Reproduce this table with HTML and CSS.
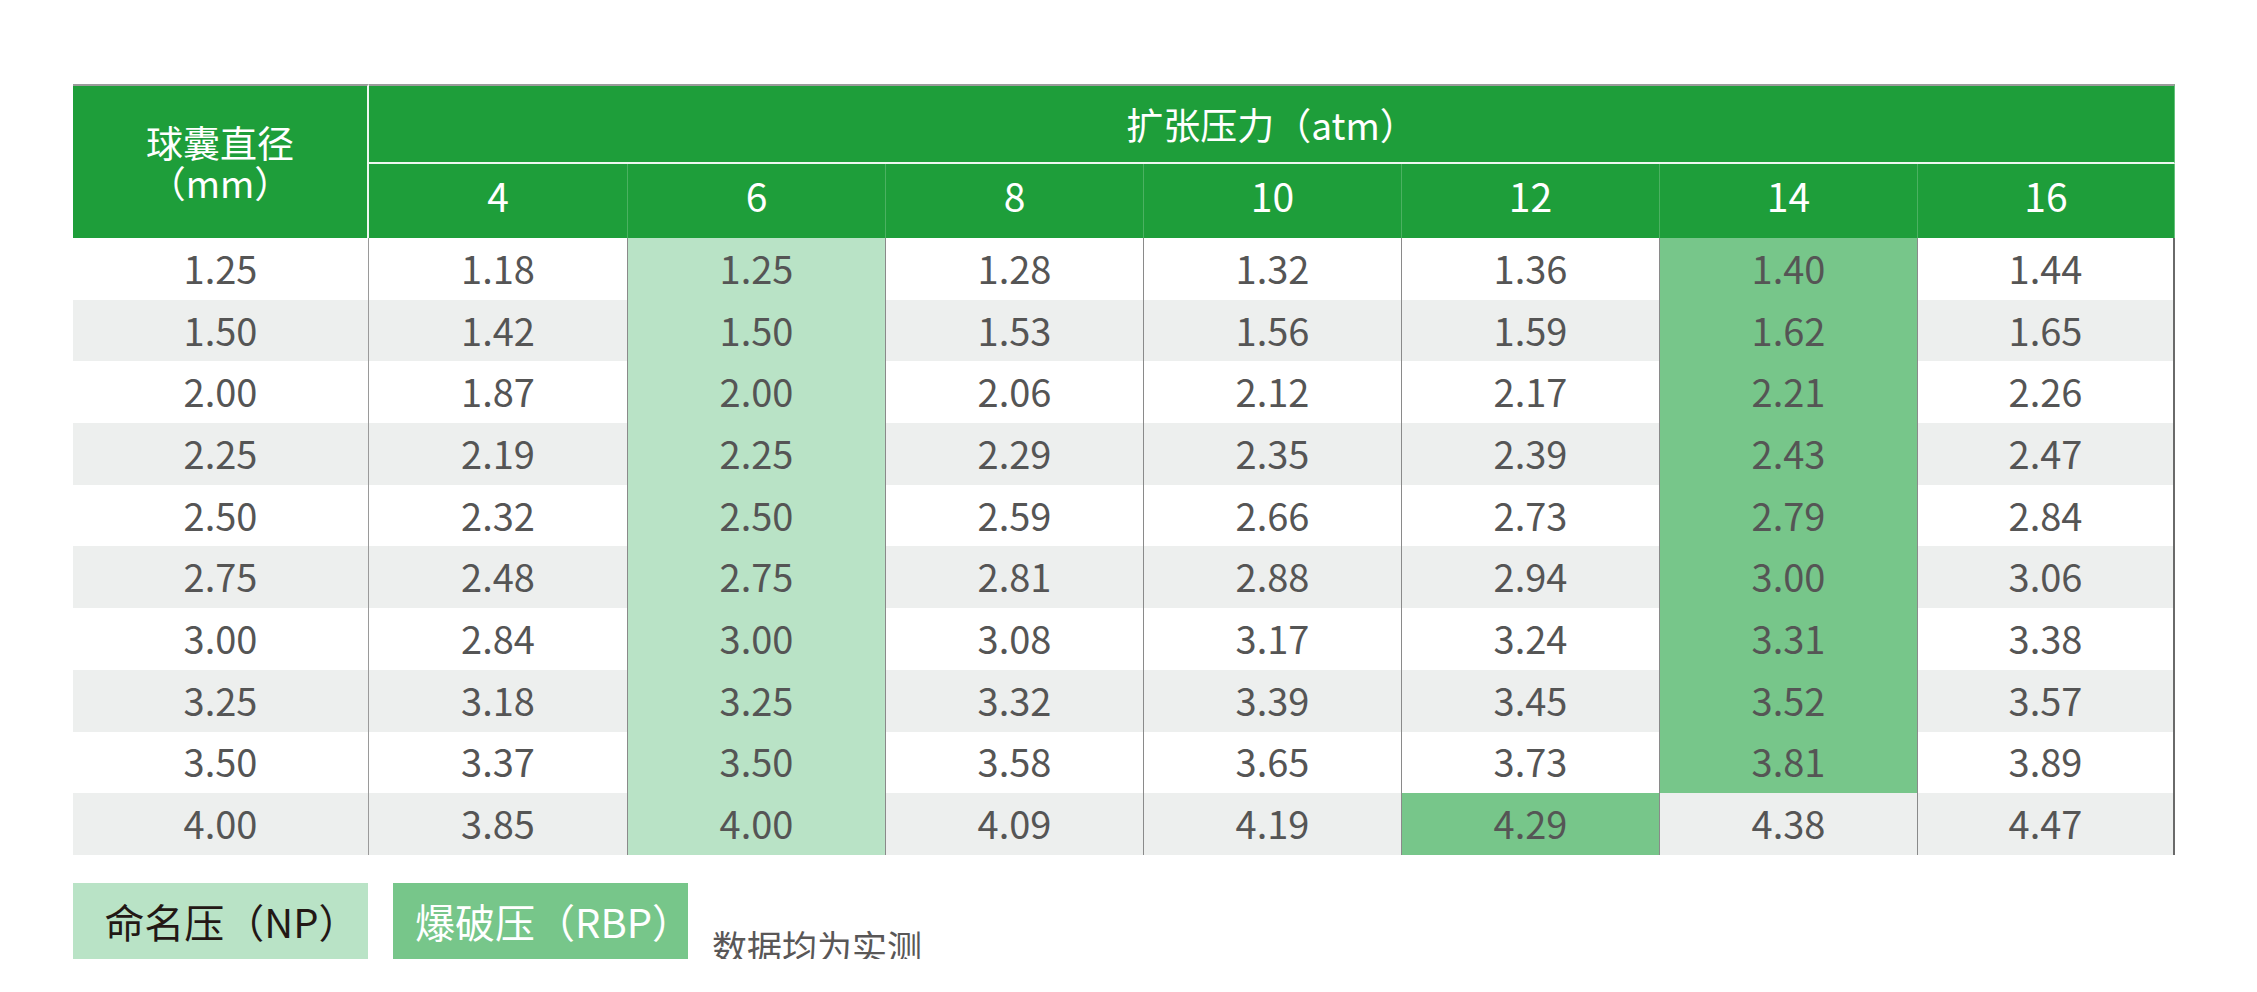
FILE: index.html
```html
<!DOCTYPE html>
<html lang="zh-CN">
<head>
<meta charset="utf-8">
<title>球囊直径 / 扩张压力</title>
<link rel="stylesheet" href="styles.css">
</head>
<body>
<main class="page">
  <table class="spec">
    <colgroup>
      <col class="col-dia">
      <col><col><col><col><col><col><col>
    </colgroup>
    <thead>
      <tr class="hrow-top">
        <th rowspan="2" class="dia-head"><span class="dia-line">球囊直径</span><span class="dia-line">（mm）</span></th>
        <th colspan="7" class="press-head">扩张压力（atm）</th>
      </tr>
      <tr class="hrow-sub">
        <th>4</th><th>6</th><th>8</th><th>10</th><th>12</th><th>14</th><th>16</th>
      </tr>
    </thead>
    <tbody>
      <tr><td>1.25</td><td>1.18</td><td class="np">1.25</td><td>1.28</td><td>1.32</td><td>1.36</td><td class="rbp">1.40</td><td>1.44</td></tr>
      <tr><td>1.50</td><td>1.42</td><td class="np">1.50</td><td>1.53</td><td>1.56</td><td>1.59</td><td class="rbp">1.62</td><td>1.65</td></tr>
      <tr><td>2.00</td><td>1.87</td><td class="np">2.00</td><td>2.06</td><td>2.12</td><td>2.17</td><td class="rbp">2.21</td><td>2.26</td></tr>
      <tr><td>2.25</td><td>2.19</td><td class="np">2.25</td><td>2.29</td><td>2.35</td><td>2.39</td><td class="rbp">2.43</td><td>2.47</td></tr>
      <tr><td>2.50</td><td>2.32</td><td class="np">2.50</td><td>2.59</td><td>2.66</td><td>2.73</td><td class="rbp">2.79</td><td>2.84</td></tr>
      <tr><td>2.75</td><td>2.48</td><td class="np">2.75</td><td>2.81</td><td>2.88</td><td>2.94</td><td class="rbp">3.00</td><td>3.06</td></tr>
      <tr><td>3.00</td><td>2.84</td><td class="np">3.00</td><td>3.08</td><td>3.17</td><td>3.24</td><td class="rbp">3.31</td><td>3.38</td></tr>
      <tr><td>3.25</td><td>3.18</td><td class="np">3.25</td><td>3.32</td><td>3.39</td><td>3.45</td><td class="rbp">3.52</td><td>3.57</td></tr>
      <tr><td>3.50</td><td>3.37</td><td class="np">3.50</td><td>3.58</td><td>3.65</td><td>3.73</td><td class="rbp">3.81</td><td>3.89</td></tr>
      <tr><td>4.00</td><td>3.85</td><td class="np">4.00</td><td>4.09</td><td>4.19</td><td class="rbp">4.29</td><td>4.38</td><td>4.47</td></tr>
    </tbody>
  </table>

  <div class="legend">
    <div class="legend-box legend-np">命名压（NP）</div>
    <div class="legend-box legend-rbp">爆破压（RBP）</div>
    <div class="legend-note">数据均为实测</div>
  </div>
</main>
</body>
</html>
```

FILE: styles.css
```css
html, body {
  margin: 0;
  padding: 0;
  background: #ffffff;
}

body {
  font-family: "Noto Sans CJK SC", "Source Sans Pro", "Noto Sans", sans-serif;
}

.page {
  padding: 84px 0 0 73px;
  width: 2102px;
}

.spec {
  width: 2102px;
  table-layout: fixed;
  border-collapse: separate;
  border-spacing: 0;
}

.col-dia {
  width: 296px;
}

/* ---------- header ---------- */
.spec th {
  background: #1e9e3a;
  color: #ffffff;
  font-weight: 400;
  padding: 0;
  text-align: center;
  vertical-align: middle;
}

.hrow-top th {
  border-top: 2px solid #9b9b9b;
}

.dia-head {
  font-size: 37px;
  border-right: 2px solid #eef7f0;
  padding-top: 2px;
}

.dia-line {
  display: block;
  height: 40px;
  line-height: 40px;
}

.press-head {
  height: 76px;
  font-size: 37px;
  line-height: 40px;
  border-bottom: 2px solid #eef7f0;
  border-right: 1px solid #63c07a;
  background-color: #1e9e3a;
  background-image: linear-gradient(to right, transparent calc(100% - 1px), rgba(255, 255, 255, 0.16) calc(100% - 1px));
  background-size: 180.6px 100%;
  background-repeat: repeat-x;
}

.hrow-sub th {
  height: 62px;
  padding-bottom: 12px;
  font-size: 39px;
  line-height: 40px;
}

.hrow-sub th + th {
  border-left: 1px solid rgba(255, 255, 255, 0.2);
}

.hrow-sub th:last-child {
  border-right: 1px solid #63c07a;
}

/* ---------- body ---------- */
.spec tbody tr {
  height: 61.7px;
}

.spec tbody tr:nth-child(even) td {
  background: #edefee;
}

.spec td {
  padding: 0 0 2px;
  text-align: center;
  vertical-align: middle;
  font-size: 38px;
  line-height: 40px;
  color: #555555;
  background: #ffffff;
}

.spec td:first-child {
  border-right: 1px solid #9a9a9a;
}

.spec td + td + td {
  border-left: 1px solid #8a8a8a;
}

.spec td:last-child {
  border-right: 2px solid #6a6a6a;
}

.spec tbody tr td.np {
  background: #b9e3c6;
}

.spec tbody tr td.rbp {
  background: #77c68a;
}

/* ---------- legend ---------- */
.legend {
  display: flex;
  align-items: flex-end;
  gap: 25px;
  margin-top: 28px;
}

.legend-box {
  width: 295px;
  height: 76px;
  display: flex;
  align-items: center;
  justify-content: center;
  font-size: 40px;
  line-height: 1;
  padding-left: 22px;
  box-sizing: border-box;
}

.legend-np {
  background: #b9e3c6;
  color: #231815;
}

.legend-rbp {
  background: #77c68a;
  color: #ffffff;
}

.legend-note {
  margin-left: -1px;
  margin-bottom: -4px;
  font-size: 35px;
  line-height: 1;
  color: #595757;
}
```
